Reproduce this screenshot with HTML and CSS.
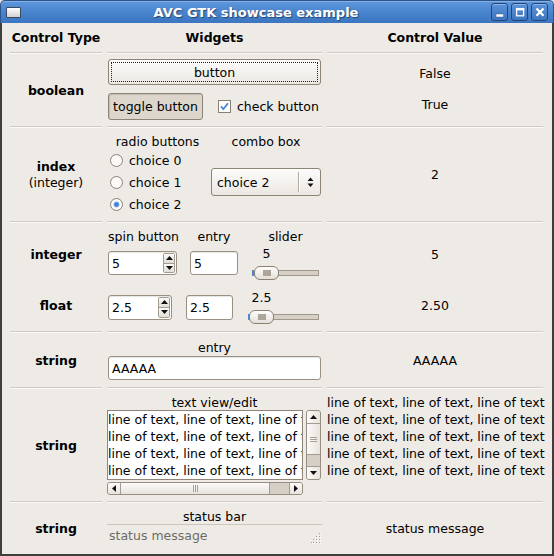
FILE: index.html
```html
<!DOCTYPE html>
<html>
<head>
<meta charset="utf-8">
<title>AVC GTK showcase example</title>
<link rel="stylesheet" href="styles.css">
</head>
<body>
<div class="window">
  <div class="titlebar">
    <div class="app-icon"></div>
    <div class="title">AVC GTK showcase example</div>
    <div class="wm-btns">
      <div class="wm-btn"><svg width="15" height="16" viewBox="0 0 15 16"><rect x="4" y="10" width="7.5" height="3" fill="#fff" stroke="#28497a" stroke-width="0.4"/></svg></div>
      <div class="wm-btn"><svg width="15" height="16" viewBox="0 0 15 16"><rect x="4.6" y="4.6" width="7" height="7.2" fill="none" stroke="#fff" stroke-width="1.3"/><rect x="4" y="4" width="8.2" height="2.4" fill="#fff"/></svg></div>
      <div class="wm-btn"><svg width="15" height="16" viewBox="0 0 15 16"><path d="M4.5 4.5 L11.5 11.8 M11.5 4.5 L4.5 11.8" stroke="#fff" stroke-width="2.3" fill="none"/></svg></div>
    </div>
  </div>
  <div class="client">
    <div class="table">
      <div class="cell head">Control Type</div>
      <div class="cell head">Widgets</div>
      <div class="cell head">Control Value</div>
      <div class="sep"></div><div class="sep"></div><div class="sep"></div>

      <div class="cell type">boolean</div>
      <div class="cell widgets w-bool">
        <div class="btn push">button</div>
        <div class="bool-line">
          <div class="btn toggle">toggle button</div>
          <div class="check">
            <svg class="check-box" width="13" height="13" viewBox="0 0 13 13"><rect x="0.5" y="0.5" width="12" height="12" fill="#fdfdfc" stroke="#8b8173"/><path d="M3 6.3 L5.4 9 L10 3.3" fill="none" stroke="#4a88d7" stroke-width="1.8"/></svg>
            <span>check button</span>
          </div>
        </div>
      </div>
      <div class="cell vals-bool"><div>False</div><div>True</div></div>
      <div class="sep"></div><div class="sep"></div><div class="sep"></div>

      <div class="cell stack"><div class="type">index</div><div>(integer)</div></div>
      <div class="cell widgets w-index">
        <div class="radio-col">
          <div class="col-label">radio buttons</div>
          <div class="radio"><svg width="13" height="13" viewBox="0 0 13 13"><circle cx="6.5" cy="6.5" r="6" fill="#fbfaf9" stroke="#8b8173"/></svg><span>choice 0</span></div>
          <div class="radio"><svg width="13" height="13" viewBox="0 0 13 13"><circle cx="6.5" cy="6.5" r="6" fill="#fbfaf9" stroke="#8b8173"/></svg><span>choice 1</span></div>
          <div class="radio"><svg width="13" height="13" viewBox="0 0 13 13"><circle cx="6.5" cy="6.5" r="6" fill="#fbfaf9" stroke="#8b8173"/><circle cx="6.5" cy="6.5" r="3" fill="#9cc0ea"/><circle cx="6.5" cy="6.5" r="2.2" fill="#3f7fd0"/></svg><span>choice 2</span></div>
        </div>
        <div class="combo-col">
          <div class="col-label">combo box</div>
          <div class="combo-wrap">
            <div class="combo">
              <span class="combo-text">choice 2</span>
              <span class="combo-sep"></span>
              <span class="combo-arrows"><svg width="7" height="12" viewBox="0 0 7 12"><path d="M0.5 5 L3.5 1.5 L6.5 5 Z M0.5 7.5 L3.5 11 L6.5 7.5 Z" fill="#111"/></svg></span>
            </div>
          </div>
        </div>
      </div>
      <div class="cell">2</div>
      <div class="sep"></div><div class="sep"></div><div class="sep"></div>

      <div class="cell vals-two type"><div>integer</div><div>float</div></div>
      <div class="cell widgets w-num">
        <div class="num-labels">
          <div class="lbl-spin">spin button</div>
          <div class="lbl-entry">entry</div>
          <div class="lbl-slider">slider</div>
        </div>
        <div class="num-row int-row">
          <div class="spin">
            <span class="spin-val">5</span>
            <span class="spin-btns">
              <span class="spin-btn"><svg width="7" height="4" viewBox="0 0 7 4"><path d="M0 4 L3.5 0 L7 4 Z" fill="#111"/></svg></span>
              <span class="spin-btn"><svg width="7" height="4" viewBox="0 0 7 4"><path d="M0 0 L3.5 4 L7 0 Z" fill="#111"/></svg></span>
            </span>
          </div>
          <div class="entry">5</div>
          <div class="scale-block">
            <div class="scale-val">5</div>
            <div class="scale"><span class="trough"></span><span class="thumb"><span class="dots"></span></span></div>
          </div>
        </div>
        <div class="num-row float-row">
          <div class="spin">
            <span class="spin-val">2.5</span>
            <span class="spin-btns">
              <span class="spin-btn"><svg width="7" height="4" viewBox="0 0 7 4"><path d="M0 4 L3.5 0 L7 4 Z" fill="#111"/></svg></span>
              <span class="spin-btn"><svg width="7" height="4" viewBox="0 0 7 4"><path d="M0 0 L3.5 4 L7 0 Z" fill="#111"/></svg></span>
            </span>
          </div>
          <div class="entry">2.5</div>
          <div class="scale-block">
            <div class="scale-val">2.5</div>
            <div class="scale"><span class="trough"></span><span class="thumb"><span class="dots"></span></span></div>
          </div>
        </div>
      </div>
      <div class="cell vals-two"><div>5</div><div>2.50</div></div>
      <div class="sep"></div><div class="sep"></div><div class="sep"></div>

      <div class="cell type">string</div>
      <div class="cell widgets w-str">
        <div class="col-label">entry</div>
        <div class="entry wide">AAAAA</div>
      </div>
      <div class="cell">AAAAA</div>
      <div class="sep"></div><div class="sep"></div><div class="sep"></div>

      <div class="cell type">string</div>
      <div class="cell widgets w-tv">
        <div class="col-label">text view/edit</div>
        <div class="scrolled">
          <div class="textview">
            <div>line of text, line of text, line of text</div>
            <div>line of text, line of text, line of text</div>
            <div>line of text, line of text, line of text</div>
            <div>line of text, line of text, line of text</div>
            <div>line of text, line of text, line of text</div>
          </div>
          <div class="vscroll">
            <span class="sb-btn up"><svg width="7" height="4" viewBox="0 0 7 4"><path d="M0 4 L3.5 0 L7 4 Z" fill="#111"/></svg></span>
            <span class="sb-slider"><span class="grip-h"></span></span>
            <span class="sb-trough"></span>
            <span class="sb-btn down"><svg width="7" height="4" viewBox="0 0 7 4"><path d="M0 0 L3.5 4 L7 0 Z" fill="#111"/></svg></span>
          </div>
          <div class="hscroll">
            <span class="sb-btn left"><svg width="4" height="7" viewBox="0 0 4 7"><path d="M4 0 L0 3.5 L4 7 Z" fill="#111"/></svg></span>
            <span class="sb-slider"><span class="grip-v"></span></span>
            <span class="sb-trough"></span>
            <span class="sb-btn right"><svg width="4" height="7" viewBox="0 0 4 7"><path d="M0 0 L4 3.5 L0 7 Z" fill="#111"/></svg></span>
          </div>
        </div>
      </div>
      <div class="cell vals-lines">
        <div>line of text, line of text, line of text</div>
        <div>line of text, line of text, line of text</div>
        <div>line of text, line of text, line of text</div>
        <div>line of text, line of text, line of text</div>
        <div>line of text, line of text, line of text</div>
      </div>
      <div class="sep"></div><div class="sep"></div><div class="sep"></div>

      <div class="cell type">string</div>
      <div class="cell widgets w-status">
        <div class="col-label">status bar</div>
        <div class="statusbar">
          <span class="status-text">status message</span>
          <svg class="grip" width="10" height="12" viewBox="0 0 10 12">
            <g fill="#a49d92">
              <rect x="8" y="0" width="1" height="1"/>
              <rect x="5" y="3" width="1" height="1"/><rect x="8" y="3" width="1" height="1"/>
              <rect x="2" y="6" width="1" height="1"/><rect x="5" y="6" width="1" height="1"/><rect x="8" y="6" width="1" height="1"/>
              <rect x="0" y="9" width="1" height="1"/><rect x="2" y="9" width="1" height="1"/><rect x="5" y="9" width="1" height="1"/><rect x="8" y="9" width="1" height="1"/>
            </g>
            <g fill="#ffffff">
              <rect x="9" y="1" width="1" height="1"/>
              <rect x="6" y="4" width="1" height="1"/><rect x="9" y="4" width="1" height="1"/>
              <rect x="3" y="7" width="1" height="1"/><rect x="6" y="7" width="1" height="1"/><rect x="9" y="7" width="1" height="1"/>
              <rect x="1" y="10" width="1" height="1"/><rect x="3" y="10" width="1" height="1"/><rect x="6" y="10" width="1" height="1"/><rect x="9" y="10" width="1" height="1"/>
            </g>
          </svg>
        </div>
      </div>
      <div class="cell">status message</div>
    </div>
  </div>
</div>
</body>
</html>
```

FILE: styles.css
```css
* { box-sizing: border-box; }
html, body { margin: 0; padding: 0; }
body {
  background: #e4e4e4;
  font-family: "DejaVu Sans", "Bitstream Vera Sans", sans-serif;
  font-size: 12.5px;
  line-height: 15px;
  color: #000;
  overflow: hidden;
}
.window {
  width: 554px;
  height: 556px;
  display: flex;
  flex-direction: column;
}
.titlebar {
  height: 23px;
  flex: none;
  display: flex;
  align-items: center;
  background: linear-gradient(#5e97dc, #4783cd 55%, #3c75c0);
  border: 1px solid #2b5389;
  border-bottom: none;
  border-radius: 5px 5px 0 0;
  box-shadow: inset 0 1px 0 rgba(255,255,255,0.25);
}
.app-icon {
  margin-left: 5px;
  width: 15px;
  height: 11px;
  border: 1px solid #3d4a5c;
  border-radius: 1px;
  background: linear-gradient(#ffffff, #d2d2d2);
}
.title {
  flex: 1;
  text-align: center;
  color: #fff;
  font-weight: bold;
  font-size: 13px;
  text-shadow: 1px 1px 1px rgba(0,0,0,0.45);
}
.wm-btns {
  display: flex;
  gap: 3px;
  margin-right: 5px;
}
.wm-btn {
  width: 17px;
  height: 18px;
  border: 1px solid #23467a;
  border-radius: 3px;
  background: linear-gradient(#5b93d9, #3e75bf);
  box-shadow: inset 0 1px 0 rgba(255,255,255,0.3);
  display: flex;
}
.client {
  flex: 1;
  background: #eeebe7;
  border: 2px solid #3e3e3e;
  border-top: none;
  padding-left: 8px;
}
.table {
  display: grid;
  grid-template-columns: 92px 215px 216px;
  grid-template-rows: 29px 2px 72px 2px 93px 2px 108px 2px 54px 2px 112px 2px 51px;
  column-gap: 5px;
}
.cell {
  display: flex;
  align-items: center;
  justify-content: center;
  white-space: nowrap;
}
.head, .type { font-weight: bold; }
.sep {
  border-top: 1px solid #cfcac2;
  border-bottom: 1px solid #fbfaf9;
}
.widgets {
  flex-direction: column;
  align-items: stretch;
  justify-content: flex-start;
}
.col-label { text-align: center; height: 15px; }

/* buttons */
.btn {
  display: flex;
  align-items: center;
  justify-content: center;
  border: 1px solid #8e8475;
  border-radius: 3px;
  background: linear-gradient(#fdfcfb, #ebe7e2);
  box-shadow: inset 0 1px 0 #fff;
}
.w-bool { padding-top: 5px; gap: 8px; }
.push {
  position: relative;
  height: 26px;
  width: 213px;
  margin-left: 1px;
}
.push::after {
  content: "";
  position: absolute;
  inset: 2px;
  border: 1px dotted #222;
}
.bool-line {
  display: flex;
  align-items: center;
  height: 27px;
  margin-left: 1px;
}
.toggle {
  width: 95px;
  height: 27px;
  background: #dcd6cd;
  box-shadow: inset 1px 1px 1px rgba(0,0,0,0.12);
}
.check {
  display: flex;
  align-items: center;
  margin-left: 15px;
}
.check-box { margin-right: 6px; }
.vals-bool {
  flex-direction: column;
  gap: 16px;
  padding-bottom: 3px;
}

/* index */
.stack {
  flex-direction: column;
  line-height: 16px;
}
.w-index {
  flex-direction: row;
  padding-top: 6px;
  padding-bottom: 6px;
}
.radio-col {
  width: 101px;
  display: flex;
  flex-direction: column;
}
.radio {
  height: 22px;
  display: flex;
  align-items: center;
  padding-left: 3px;
}
.radio svg { margin-right: 6px; }
.combo-col {
  width: 110px;
  margin-left: 3px;
  display: flex;
  flex-direction: column;
}
.combo-wrap {
  flex: 1;
  display: flex;
  align-items: center;
}
.combo {
  display: flex;
  align-items: center;
  width: 110px;
  height: 28px;
  border: 1px solid #8e8475;
  border-radius: 3px;
  background: linear-gradient(#fdfcfb, #ebe7e2);
  box-shadow: inset 0 1px 0 #fff;
}
.combo-text { flex: 1; padding-left: 5px; }
.combo-sep {
  width: 2px;
  height: 20px;
  border-left: 1px solid #b3aba0;
  border-right: 1px solid #fff;
}
.combo-arrows {
  width: 20px;
  display: flex;
  justify-content: center;
}

/* numbers */
.vals-two {
  flex-direction: column;
  justify-content: flex-start;
  padding-top: 24px;
  gap: 36px;
}
.w-num { padding-top: 6px; }
.num-labels { display: flex; margin-left: 1px; }
.num-labels div { text-align: center; }
.lbl-spin { width: 70px; }
.lbl-entry { width: 48px; margin-left: 12px; }
.lbl-slider { width: 67px; margin-left: 14px; }
.num-row {
  display: flex;
  align-items: center;
  height: 34px;
  margin-left: 1px;
}
.int-row { margin-top: 2px; }
.float-row { margin-top: 10px; }
.entry {
  display: flex;
  align-items: center;
  background: #fff;
  border: 1px solid #9a9183;
  border-radius: 3px;
  box-shadow: inset 0 1px 1px rgba(0,0,0,0.1);
  padding-left: 3px;
}
.spin {
  display: flex;
  background: #fff;
  border: 1px solid #9a9183;
  border-radius: 3px;
  box-shadow: inset 0 1px 1px rgba(0,0,0,0.1);
}
.spin-val {
  flex: 1;
  display: flex;
  align-items: center;
  padding-left: 3px;
}
.spin-btns {
  width: 12px;
  margin: 1px 1px 1px 0;
  display: flex;
  flex-direction: column;
  border: 1px solid #a39b8e;
  border-radius: 2px;
  overflow: hidden;
}
.spin-btn {
  flex: 1;
  display: flex;
  align-items: center;
  justify-content: center;
  background: linear-gradient(#fbfaf8, #e2ddd6);
}
.spin-btn + .spin-btn { border-top: 1px solid #a39b8e; }
.int-row .spin { width: 69px; height: 24px; }
.int-row .entry { width: 48px; height: 24px; margin-left: 13px; }
.int-row .scale-block { width: 67px; margin-left: 14px; }
.float-row .spin { width: 64px; height: 25px; }
.float-row .entry { width: 47px; height: 25px; margin-left: 14px; }
.float-row .scale-block { width: 71px; margin-left: 15px; }
.scale-block {
  display: flex;
  flex-direction: column;
  gap: 5px;
}
.scale-val { width: 25px; text-align: center; }
.int-row .scale-val { margin-left: 2px; }
.float-row .scale-val { margin-left: 1px; }
.scale {
  position: relative;
  height: 14px;
  display: flex;
  align-items: center;
}
.trough {
  flex: 1;
  height: 6px;
  background: #d6d0c6;
  border: 1px solid #a0988b;
  border-left: 2px solid #4a86cf;
}
.thumb {
  position: absolute;
  top: 0;
  left: 2px;
  width: 25px;
  height: 14px;
  border: 1px solid #8b8173;
  border-radius: 6px;
  background: linear-gradient(#ffffff, #e4dfd8);
  display: flex;
  align-items: center;
  justify-content: center;
}
.float-row .thumb { left: 1px; }
.dots {
  width: 8px;
  height: 6px;
  background-image: radial-gradient(circle, #aaa398 0.7px, transparent 0.9px);
  background-size: 2px 2px;
}

/* string entry */
.w-str { padding-top: 7px; }
.entry.wide {
  margin-top: 1px;
  margin-left: 1px;
  width: 213px;
  height: 24px;
}

/* text view */
.w-tv { padding-top: 6px; }
.scrolled {
  display: grid;
  grid-template-columns: 196px 15px;
  grid-template-rows: 70px 13px;
  column-gap: 3px;
  row-gap: 2px;
}
.textview {
  border: 1px solid #8f8679;
  background: #fff;
  overflow: hidden;
  white-space: nowrap;
  line-height: 17px;
}
.vscroll, .hscroll {
  display: flex;
  border: 1px solid #978e81;
  border-radius: 3px;
  background: #d5cfc5;
  overflow: hidden;
}
.vscroll { flex-direction: column; }
.sb-btn {
  flex: none;
  display: flex;
  align-items: center;
  justify-content: center;
  background: linear-gradient(90deg, #fcfbfa, #e7e3dd);
}
.vscroll .sb-btn { height: 13px; background: linear-gradient(90deg, #fcfbfa, #e7e3dd); }
.vscroll .up { border-bottom: 1px solid #a39b8e; }
.vscroll .down { border-top: 1px solid #a39b8e; }
.vscroll .sb-slider {
  height: 31px;
  border-bottom: 1px solid #a39b8e;
}
.sb-slider {
  display: flex;
  align-items: center;
  justify-content: center;
  background: linear-gradient(90deg, #fcfbfa, #e7e3dd);
}
.sb-trough { flex: 1; }
.hscroll .sb-btn { width: 13px; background: linear-gradient(#fcfbfa, #e7e3dd); }
.hscroll .left { border-right: 1px solid #a39b8e; }
.hscroll .right { border-left: 1px solid #a39b8e; }
.hscroll .sb-slider {
  width: 149px;
  border-right: 1px solid #a39b8e;
  background: linear-gradient(#fcfbfa, #e7e3dd);
}
.grip-h {
  width: 7px;
  height: 5px;
  background: repeating-linear-gradient(#a8a095 0 1px, transparent 1px 2px);
}
.grip-v {
  width: 5px;
  height: 7px;
  background: repeating-linear-gradient(90deg, #a8a095 0 1px, transparent 1px 2px);
}
.vals-lines {
  flex-direction: column;
  justify-content: flex-start;
  align-items: flex-start;
  padding-top: 5px;
  line-height: 17px;
}

/* status */
.w-status { padding-top: 6px; }
.statusbar {
  display: flex;
  height: 23px;
  border-top: 1px solid #cbc6bd;
  color: #6f6b64;
}
.status-text { flex: 1; padding: 3px 0 0 2px; }
.grip { align-self: flex-end; margin: 0 1px 2px 0; }
```
